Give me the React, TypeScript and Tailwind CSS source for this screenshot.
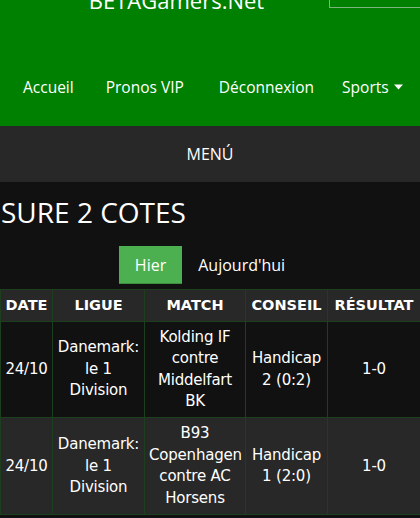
import React from 'react';

const navLinks = ['Accueil', 'Pronos VIP', 'Déconnexion'];

const rows = [
  { date: '24/10', ligue: 'Danemark: le 1 Division', match: 'Kolding IF contre Middelfart BK', conseil: 'Handicap 2 (0:2)', resultat: '1-0' },
  { date: '24/10', ligue: 'Danemark: le 1 Division', match: 'B93 Copenhagen contre AC Horsens', conseil: 'Handicap 1 (2:0)', resultat: '1-0' },
];

const cell = 'border border-[#1e3f1e] px-[4px] py-[5px] text-center align-middle';

export default function App() {
  return (
    <div className="min-h-[518px] bg-[#111111] text-white font-['Open_Sans',sans-serif]">
      {/* --- Header --- */}
      <header className="bg-[#008000] h-[126px] overflow-hidden">
        <div className="flex items-start -mt-[15px]">
          <div className="flex-1 pl-6 text-center text-[22px] leading-[30px] h-[30px]">BETAGamers.Net</div>
          <div className="w-[91px] h-[23px] border-l border-b border-[#7fb27f]" />
        </div>
        <nav className="flex items-center mt-[52px] pl-[7px] text-[15.5px] leading-[20px]">
          {navLinks.map((l, i) => (
            <a key={l} className={i === 2 ? 'pl-[19px] pr-4 py-[10px]' : 'px-4 py-[10px]'}>{l}</a>
          ))}
          <a className="pl-3 py-[10px] flex items-center gap-[5px]">
            Sports
            <svg width="9" height="6" viewBox="0 0 9 6"><path d="M0 0.5h9L4.5 5.5z" fill="white" /></svg>
          </a>
        </nav>
      </header>

      {/* --- Menu bar --- */}
      <div className="bg-[#282828] h-[56px] flex items-center justify-center text-[16px]">MENÚ</div>

      <h1 className="mt-[15px] text-[28px] leading-[31px] pl-[1px]">SURE 2 COTES</h1>

      {/* --- Tabs --- */}
      <div className="mt-[18px] flex justify-center text-[16px]">
        <button className="h-[38px] px-4 bg-[#4caf50] border-b border-[#3d8f40]">Hier</button>
        <button className="h-[38px] px-4">Aujourd'hui</button>
      </div>

      {/* --- Table --- */}
      <table className="mt-[5px] w-full table-fixed border-collapse font-['DejaVu_Sans',sans-serif] text-[15px] leading-[1.42857] tracking-[-0.2px]">
        <colgroup>
          <col className="w-[52px]" />
          <col className="w-[92px]" />
          <col className="w-[101px]" />
          <col className="w-[82px]" />
          <col className="w-[93px]" />
        </colgroup>
        <thead className="bg-[#282828]">
          <tr className="text-[14.5px] font-bold tracking-normal">
            <th className={cell}>DATE</th>
            <th className={cell}>LIGUE</th>
            <th className={cell}>MATCH</th>
            <th className={cell}>CONSEIL</th>
            <th className={cell}>RÉSULTAT</th>
          </tr>
        </thead>
        <tbody>
          {rows.map((r, i) => (
            <tr key={i} className={i % 2 === 1 ? 'bg-[#282828]' : 'bg-[#111111]'}>
              <td className={cell}>{r.date}</td>
              <td className={cell}>{r.ligue}</td>
              <td className={cell}>{r.match}</td>
              <td className={cell}>{r.conseil}</td>
              <td className={cell}>{r.resultat}</td>
            </tr>
          ))}
        </tbody>
      </table>
    </div>
  );
}
